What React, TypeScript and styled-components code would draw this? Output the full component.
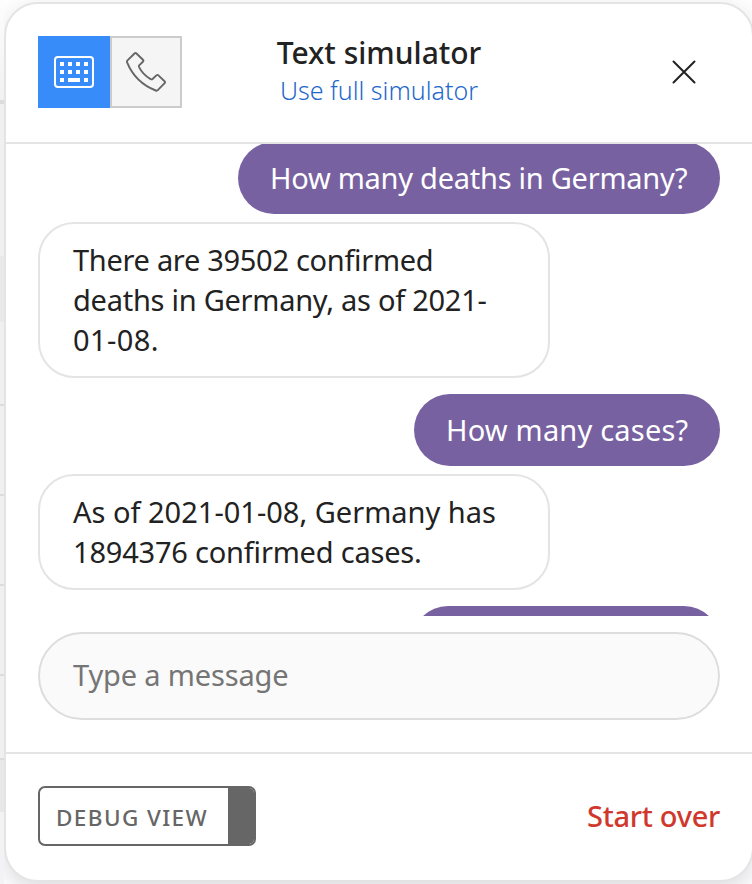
import React from 'react';
import styled, { createGlobalStyle } from 'styled-components';

const GlobalStyle = createGlobalStyle`
  *, *::before, *::after { box-sizing: border-box; }
  body { margin: 0; background: #fff; font-family: 'Noto Sans', sans-serif; color: #222; overflow: hidden; }
  button, input { font-family: inherit; margin: 0; }
`;

const Page = styled.div`
  display: flex;
  width: 752px;
  height: 884px;
  overflow: hidden;
`;

const Backdrop = styled.div`
  flex: 0 0 4px;
  z-index: 1;
`;

const BackdropRow = styled.div<{ $height: number; $fill: string; $line?: number }>`
  height: ${(p) => p.$height}px;
  background: ${(p) => p.$fill};
  border-bottom: ${(p) => p.$line ?? 0}px solid #dcdcdf;
`;

const Card = styled.main`
  flex: 0 0 750px;
  height: 880px;
  margin-top: 2px;
  display: flex;
  flex-direction: column;
  background: #fff;
  border: 2px solid #e4e4e5;
  border-radius: 34px;
  box-shadow: 0 8px 24px rgba(30, 30, 60, 0.16);
`;

const Header = styled.header`
  flex: 0 0 140px;
  display: grid;
  grid-template-columns: 144px 1fr 144px;
  align-items: start;
  padding: 32px 32px 0;
  border-bottom: 2px solid #e4e4e5;
`;

const ModeSwitch = styled.div`
  display: flex;
`;

const ModeButton = styled.button<{ $active?: boolean }>`
  width: 72px;
  height: 72px;
  display: grid;
  place-items: center;
  padding: 0;
  border: 2px solid ${(p) => (p.$active ? '#388cfa' : '#ccc')};
  background: ${(p) => (p.$active ? '#388cfa' : '#f5f5f5')};
`;

const Heading = styled.div`
  display: flex;
  flex-direction: column;
  align-items: center;
  white-space: nowrap;
`;

const Title = styled.h1`
  margin: -3px 0 0;
  font-size: 30px;
  line-height: 40px;
  font-weight: 500;
`;

const FullLink = styled.a`
  font-size: 25px;
  line-height: 34px;
  font-weight: 300;
  color: #1f68ca;
`;

const CloseButton = styled.button`
  width: 72px;
  height: 72px;
  justify-self: end;
  display: grid;
  place-items: center;
  padding: 0;
  border: 0;
  background: none;
`;

const Messages = styled.section`
  flex: 0 0 472px;
  display: flex;
  flex-direction: column;
  padding: 0 32px;
  overflow: hidden;
`;

const Bubble = styled.div`
  flex-shrink: 0;
  font-size: 29px;
  line-height: 40px;
  border-radius: 36px;
  white-space: nowrap;
`;

const UserBubble = styled(Bubble)<{ $width: number }>`
  align-self: flex-end;
  width: ${(p) => p.$width}px;
  height: 72px;
  margin-top: 16px;
  padding: 16px 32px;
  background: #7861a0;
  color: #fff;

  &:first-child { margin-top: -2px; }
`;

const BotBubble = styled(Bubble)`
  width: 512px;
  margin-top: 8px;
  padding: 16px 32px 16px 33px;
  border: 2px solid #e4e4e4;
`;

const Line = styled.div<{ $tracking: number }>`
  letter-spacing: ${(p) => p.$tracking}px;
`;

const Composer = styled.div`
  flex: 0 0 138px;
  padding: 16px 32px 0;
  border-bottom: 2px solid #e4e4e5;
`;

const MessageInput = styled.input`
  display: block;
  width: 100%;
  height: 88px;
  padding: 0 32px 3px 33px;
  border: 2px solid #ddd;
  border-radius: 44px;
  background: #fafafa;
  font-size: 29px;
  letter-spacing: -0.15px;
  outline: none;

  &::placeholder { color: #757575; opacity: 1; }
`;

const Footer = styled.footer`
  flex: 1;
  display: flex;
  align-items: flex-start;
  justify-content: space-between;
  padding: 32px 32px 0;
`;

const DebugButton = styled.button`
  width: 218px;
  height: 60px;
  display: flex;
  padding: 0;
  border: 2px solid #666;
  border-radius: 7px;
  background: #fff;
  overflow: hidden;
`;

const DebugLabel = styled.span`
  width: 188px;
  padding-left: 16px;
  text-align: left;
  white-space: nowrap;
  color: #666;
  font-size: 22.5px;
  line-height: 59px;
  letter-spacing: 1.4px;
  font-weight: 500;
`;

const DebugHandle = styled.span`
  flex: 1;
  align-self: stretch;
  background: #666;
`;

const StartOver = styled.button`
  padding: 0;
  border: 0;
  background: none;
  color: #d0382d;
  font-size: 29px;
  line-height: 60px;
  font-weight: 500;
  letter-spacing: -0.3px;
`;

const keyColumns = [6, 14, 22, 30];

const KeyboardIcon = () => (
  <svg width="40" height="32" viewBox="0 0 40 32" fill="#fff">
    <rect x="1" y="1" width="38" height="30" rx="3" fill="none" stroke="#fff" strokeWidth="2" />
    {[6, 14].map((y) => keyColumns.map((x) => <rect key={`${x}-${y}`} x={x} y={y} width="4" height="4" />))}
    <rect x="6" y="22" width="4" height="4" />
    <rect x="14" y="22" width="12" height="4" />
    <rect x="30" y="22" width="4" height="4" />
  </svg>
);

const PhoneIcon = () => (
  <svg width="40" height="40" viewBox="0 0 40 40" fill="none" stroke="#666" strokeWidth="1.9" strokeLinejoin="round">
    <path d="M8.5 1.5 Q9.5 .6 10.5 1.5 L16.9 7.8 Q17.9 8.8 16.9 9.8 L13.4 13.1 Q12.6 14 13.1 15.1 C15.4 19.8 19.6 24.2 24.6 27.1 Q25.8 27.8 26.8 26.8 L30.4 23.4 Q31.4 22.5 32.4 23.4 L38.5 29.2 Q39.5 30.2 38.6 31.2 L31.8 38.2 Q31 39 29.8 38.5 C16 33 6.3 23.2 1.1 10.3 Q.6 9.2 1.5 8.3 Z" />
  </svg>
);

const CloseIcon = () => (
  <svg width="24" height="24" viewBox="0 0 24 24" stroke="#222" strokeWidth="2" strokeLinecap="round">
    <path d="M1.5 1.5 22.5 22.5M22.5 1.5 1.5 22.5" />
  </svg>
);

export default function App() {
  return (
    <>
      <GlobalStyle />
      <Page>
        <Backdrop>
          <BackdropRow $height={104} $fill="linear-gradient(#fdfdfd, #f1f1f3)" $line={4} />
          <BackdropRow $height={152} $fill="#f0f0f2" />
          <BackdropRow $height={66} $fill="#e9e9eb" />
          <BackdropRow $height={84} $fill="#f0f0f2" $line={2} />
          <BackdropRow $height={90} $fill="#f0f0f2" $line={2} />
          <BackdropRow $height={90} $fill="#f0f0f2" $line={2} />
          <BackdropRow $height={90} $fill="#f0f0f2" $line={2} />
          <BackdropRow $height={84} $fill="#f0f0f2" $line={2} />
          <BackdropRow $height={52} $fill="#e8e8ea" />
          <BackdropRow $height={72} $fill="#f3f3f5" />
        </Backdrop>
        <Card>
          <Header>
            <ModeSwitch>
              <ModeButton $active aria-label="Text"><KeyboardIcon /></ModeButton>
              <ModeButton aria-label="Voice"><PhoneIcon /></ModeButton>
            </ModeSwitch>
            <Heading>
              <Title>Text simulator</Title>
              <FullLink>Use full simulator</FullLink>
            </Heading>
            <CloseButton aria-label="Close"><CloseIcon /></CloseButton>
          </Header>
          <Messages>
            <UserBubble $width={482}>
              <Line $tracking={-0.26}>How many deaths in Germany?</Line>
            </UserBubble>
            <BotBubble>
              <Line $tracking={-0.3}>There are 39502 confirmed</Line>
              <Line $tracking={-0.26}>deaths in Germany, as of 2021-</Line>
              <Line $tracking={0.4}>01-08.</Line>
            </BotBubble>
            <UserBubble $width={306}>
              <Line $tracking={0.2}>How many cases?</Line>
            </UserBubble>
            <BotBubble>
              <Line $tracking={0}>As of 2021-01-08, Germany has</Line>
              <Line $tracking={-0.2}>1894376 confirmed cases.</Line>
            </BotBubble>
            <UserBubble $width={308} />
          </Messages>
          <Composer>
            <MessageInput placeholder="Type a message" />
          </Composer>
          <Footer>
            <DebugButton>
              <DebugLabel>DEBUG VIEW</DebugLabel>
              <DebugHandle />
            </DebugButton>
            <StartOver>Start over</StartOver>
          </Footer>
        </Card>
      </Page>
    </>
  );
}
